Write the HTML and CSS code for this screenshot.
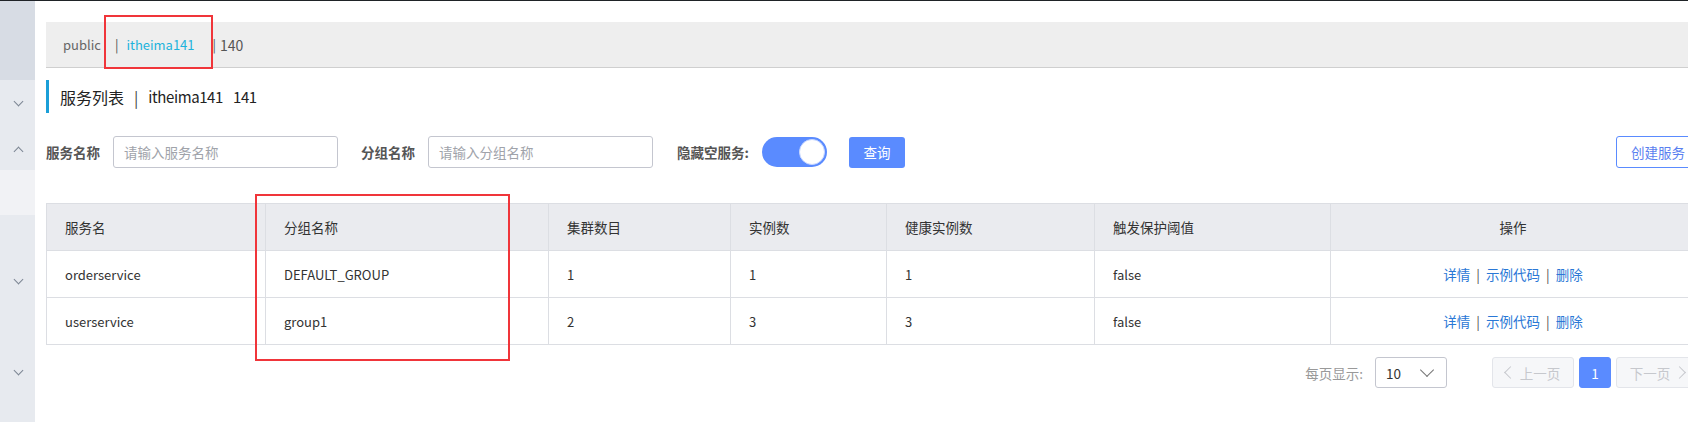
FILE: index.html
```html
<!DOCTYPE html>
<html lang="zh">
<head>
<meta charset="utf-8">
<title>服务列表</title>
<link rel="stylesheet" href="styles.css">
</head>
<body>
<div class="topline"></div>
<div class="app">
  <aside class="sidebar">
    <div class="sb sb-top"></div>
    <div class="sb sb-a"><span class="chev down"></span><span class="chev up"></span></div>
    <div class="sb sb-light"></div>
    <div class="sb sb-b"><span class="chev down d1"></span><span class="chev down d2"></span></div>
  </aside>
  <main class="main">
    <div class="crumbs">
      <span class="ns">public</span>
      <span class="ns sep">|</span><span class="ns active">itheima141</span>
      <span class="ns sep2">|</span><span class="ns last">140</span>
      <div class="mark mark-ns"></div>
    </div>
    <div class="title">
      <span>服务列表</span><span class="tsep">|</span><span class="tlatin">itheima141</span><span class="tlatin tid">141</span>
    </div>
    <div class="filters">
      <label class="flabel">服务名称</label>
      <div class="input">请输入服务名称</div>
      <label class="flabel l2">分组名称</label>
      <div class="input">请输入分组名称</div>
      <label class="flabel l3">隐藏空服务:</label>
      <div class="toggle"><span class="knob"></span></div>
      <button class="btn-primary">查询</button>
      <div class="spacer"></div>
      <button class="btn-outline">创建服务</button>
    </div>
    <div class="table">
      <div class="cell th">服务名</div>
      <div class="cell th">分组名称</div>
      <div class="cell th">集群数目</div>
      <div class="cell th">实例数</div>
      <div class="cell th">健康实例数</div>
      <div class="cell th">触发保护阈值</div>
      <div class="cell th center">操作</div>

      <div class="cell">orderservice</div>
      <div class="cell">DEFAULT_GROUP</div>
      <div class="cell">1</div>
      <div class="cell">1</div>
      <div class="cell">1</div>
      <div class="cell">false</div>
      <div class="cell center ops"><a>详情</a><span class="osep">|</span><a>示例代码</a><span class="osep">|</span><a>删除</a></div>

      <div class="cell">userservice</div>
      <div class="cell">group1</div>
      <div class="cell">2</div>
      <div class="cell">3</div>
      <div class="cell">3</div>
      <div class="cell">false</div>
      <div class="cell center ops"><a>详情</a><span class="osep">|</span><a>示例代码</a><span class="osep">|</span><a>删除</a></div>
      <div class="mark mark-col"></div>
    </div>
    <div class="pager">
      <span class="plabel">每页显示:</span>
      <div class="select"><span>10</span><span class="schev"></span></div>
      <button class="pbtn prev"><span class="pchev left"></span>上一页</button>
      <button class="pbtn cur">1</button>
      <button class="pbtn next">下一页<span class="pchev right"></span></button>
    </div>
  </main>
</div>
</body>
</html>
```
FILE: styles.css
```css
html, body {
  margin: 0;
  padding: 0;
  overflow: hidden;
  background: #fff;
  font-family: "Noto Sans CJK SC", "Noto Sans", sans-serif;
  color: #333;
  font-size: 14px;
}
.topline {
  height: 1px;
  background: #1f2327;
}
.app {
  display: flex;
  height: 421px;
}
.sidebar {
  width: 35px;
  flex: none;
  display: flex;
  flex-direction: column;
}
.sb { position: relative; }
.sb-top { height: 79px; background: #d7dce4; }
.sb-a { height: 90px; background: #e7eaef; }
.sb-light { height: 45px; background: #f1f2f5; }
.sb-b { flex: 1; background: #e7eaef; }
.chev {
  position: absolute;
  left: 15px;
  width: 6px;
  height: 6px;
  border-right: 1px solid #7d8694;
  border-bottom: 1px solid #7d8694;
}
.chev.down { transform: rotate(45deg); }
.chev.up { transform: rotate(-135deg); }
.sb-a .down { top: 18px; }
.sb-a .up { top: 68px; }
.sb-b .d1 { top: 61px; }
.sb-b .d2 { top: 152px; }

.main {
  width: 1655px;
  flex: none;
  padding-left: 11px;
}
.crumbs {
  position: relative;
  margin-top: 21px;
  height: 45px;
  background: #eeeeee;
  border-bottom: 1px solid #cfcfcf;
  display: flex;
  align-items: center;
  padding-left: 17px;
  font-size: 13px;
  color: #666;
}
.ns { line-height: 1; }
.sep { margin-left: 14px; color: #555; }
.active { color: #1cb3dc; margin-left: 8px; }
.sep2 { margin-left: 18px; color: #555; }
.last { margin-left: 4px; color: #555; font-size: 14px; }
.mark {
  position: absolute;
  border: 2.5px solid #f0353a;
  pointer-events: none;
}
.mark-ns {
  left: 58px;
  top: -7px;
  width: 105px;
  height: 50px;
}
.title {
  margin-top: 12px;
  height: 33px;
  border-left: 3px solid #1b9fd8;
  display: flex;
  align-items: center;
  padding-left: 11px;
  font-size: 16px;
  color: #222;
}
.tlatin { font-size: 15px; letter-spacing: -0.4px; }
.tsep { margin: 0 10px 0 10px; color: #444; }
.tid { margin-left: 10px; }

.filters {
  margin-top: 23px;
  height: 32px;
  display: flex;
  align-items: center;
}
.flabel {
  font-size: 13.5px;
  font-weight: 700;
  color: #555;
  margin-right: 13px;
}
.l2 { margin-left: 23px; margin-right: 13px; }
.l3 { margin-left: 24px; margin-right: 13px; }
.input {
  box-sizing: border-box;
  width: 225px;
  height: 32px;
  border: 1px solid #c4c6cf;
  border-radius: 3px;
  padding-left: 10px;
  display: flex;
  align-items: center;
  font-size: 13.5px;
  color: #a0a3aa;
}
.toggle {
  position: relative;
  width: 65px;
  height: 30px;
  border-radius: 15px;
  background: #5a8bff;
}
.knob {
  position: absolute;
  right: 2px;
  top: 2px;
  box-sizing: border-box;
  width: 26px;
  height: 26px;
  border-radius: 50%;
  background: #fff;
  border: 1px solid #c9d8ff;
}
.btn-primary {
  margin-left: 22px;
  width: 56px;
  height: 31px;
  border: none;
  border-radius: 3px;
  background: #5a8bff;
  color: #fff;
  font-family: inherit;
  font-size: 13.5px;
  padding: 0;
}
.spacer { flex: 1; }
.btn-outline {
  width: 85px;
  height: 32px;
  box-sizing: border-box;
  border: 1px solid #5a8bff;
  border-radius: 3px;
  background: #fff;
  color: #5a7ff0;
  font-family: inherit;
  font-size: 13.5px;
  padding: 0 0 0 14px;
  text-align: left;
}

.table {
  position: relative;
  margin-top: 35px;
  width: 1650px;
  display: grid;
  grid-template-columns: 219px 283px 182px 156px 208px 236px 1fr;
  border-top: 1px solid #dcdee3;
  border-left: 1px solid #dcdee3;
  box-sizing: border-box;
}
.cell {
  box-sizing: border-box;
  height: 47px;
  border-right: 1px solid #dcdee3;
  border-bottom: 1px solid #dcdee3;
  display: flex;
  align-items: center;
  padding-left: 18px;
  font-size: 13px;
  color: #333;
}
.th {
  background: #eaebef;
  height: 47px;
  font-size: 13.5px;
}
.center {
  justify-content: center;
  padding-left: 0;
}
.ops { font-size: 13.5px; }
.ops a { color: #2a78d6; }
.osep { margin: 0 6px; color: #555; }
.mark-col {
  left: 208px;
  top: -10px;
  width: 251px;
  height: 163px;
}

.pager {
  margin-top: 12px;
  width: 1652px;
  display: flex;
  align-items: center;
  justify-content: flex-end;
  height: 31px;
}
.plabel {
  font-size: 13.5px;
  color: #999;
  margin-right: 12px;
}
.select {
  box-sizing: border-box;
  width: 72px;
  height: 31px;
  border: 1px solid #c4c6cf;
  border-radius: 3px;
  display: flex;
  align-items: center;
  padding-left: 10px;
  position: relative;
  font-size: 13.5px;
  color: #333;
}
.schev {
  position: absolute;
  right: 14px;
  top: 7px;
  width: 9px;
  height: 9px;
  border-right: 1px solid #777;
  border-bottom: 1px solid #777;
  transform: rotate(45deg);
}
.pbtn {
  box-sizing: border-box;
  height: 31px;
  border: 1px solid #e3e5ea;
  border-radius: 3px;
  background: #f6f7f9;
  color: #c6c8cd;
  font-family: inherit;
  font-size: 13.5px;
  padding: 0;
  display: flex;
  align-items: center;
  justify-content: center;
}
.prev { width: 82px; margin-left: 45px; }
.cur {
  width: 32px;
  margin-left: 5px;
  background: #5a8bff;
  border-color: #5a8bff;
  color: #fff;
}
.next { width: 82px; margin-left: 5px; }
.pchev {
  width: 8px;
  height: 8px;
  border-left: 1px solid #c6c8cd;
  border-bottom: 1px solid #c6c8cd;
}
.pchev.left { transform: rotate(45deg); margin-right: 5px; }
.pchev.right { transform: rotate(-135deg); margin-left: 5px; }
```
